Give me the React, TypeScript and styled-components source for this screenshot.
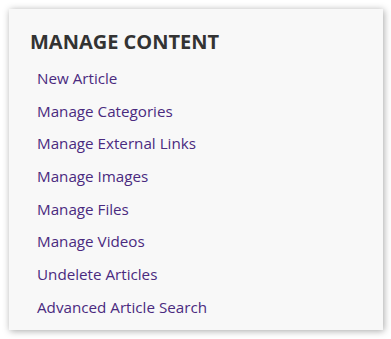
import React from 'react';
import styled, { createGlobalStyle } from 'styled-components';

const GlobalStyle = createGlobalStyle`
  body {
    margin: 0;
    background: #ffffff;
    font-family: "Open Sans", "Liberation Sans", sans-serif;
  }
`;

const Page = styled.div`
  padding: 9px 8px 9px 9px;
`;

const Card = styled.div`
  width: 374px;
  height: 321px;
  box-sizing: border-box;
  background: #f8f8f8;
  box-shadow: 1px 1px 7px rgba(0, 0, 0, 0.35);
  padding: 20px 20px 0 21px;
`;

const Title = styled.h2`
  margin: 0 0 13px;
  font-size: 20px;
  font-weight: 700;
  line-height: 26px;
  color: #333333;
  text-transform: uppercase;
`;

const LinkList = styled.ul`
  list-style: none;
  margin: 0;
  padding: 0 0 0 7px;
`;

const Item = styled.li`
  height: 32.7px;
  font-size: 15.2px;
  line-height: 20px;
`;

const Link = styled.a`
  color: #4a2a7f;
  text-decoration: none;
`;

const links = [
  'New Article',
  'Manage Categories',
  'Manage External Links',
  'Manage Images',
  'Manage Files',
  'Manage Videos',
  'Undelete Articles',
  'Advanced Article Search',
];

const App: React.FC = () => (
  <>
    <GlobalStyle />
    <Page>
      <Card>
        <Title>Manage Content</Title>
        <LinkList>
          {links.map((label) => (
            <Item key={label}>
              <Link href="#">{label}</Link>
            </Item>
          ))}
        </LinkList>
      </Card>
    </Page>
  </>
);

export default App;
